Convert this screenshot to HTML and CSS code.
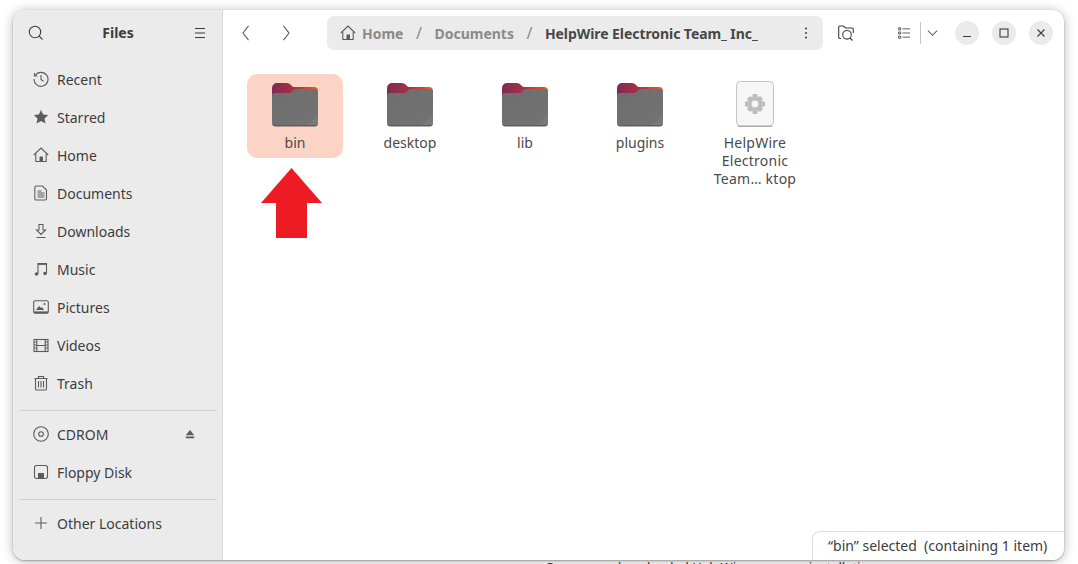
FILE: index.html
```html
<!DOCTYPE html>
<html lang="en">
<head>
<meta charset="utf-8">
<title>Files</title>
<link rel="stylesheet" href="styles.css">
</head>
<body>
<div class="window">
  <aside class="sidebar">
    <header class="side-head">
      <svg class="ic dark" viewBox="0 0 16 16"><circle cx="7" cy="7" r="5.7"/><path d="M11.2 11.2l3.3 3.3"/></svg>
      <span class="side-title">Files</span>
      <svg class="ic dark" viewBox="0 0 16 16"><path d="M3 3.500h10M3 8h10M3 12.500h10"/></svg>
    </header>
    <nav class="places">
      <a class="place"><svg class="ic" viewBox="0 0 16 16"><path d="M2.200 4.400A7 7 0 1 1 1 8"/><path d="M1.400 2v3h3"/><path d="M8 4v4.500l2.600 1.800"/></svg>Recent</a>
      <a class="place"><svg class="ic fill" viewBox="0 0 16 16"><path d="M8 .9l2.200 4.600 5 .6-3.700 3.400 1 5L8 12l-4.500 2.500 1-5L.8 6.100l5-.6z"/></svg>Starred</a>
      <a class="place"><svg class="ic" viewBox="0 0 16 16"><path d="M.8 8L8 1l7.200 7"/><path d="M2.800 7v7.500h10.400V7"/><path class="solid" d="M6.500 9.500h3.500v5H6.500z"/></svg>Home</a>
      <a class="place"><svg class="ic" viewBox="0 0 16 16"><path d="M3.300 1h6.200l4 4v8.500a1.500 1.500 0 0 1-1.500 1.500H3.300a1.500 1.500 0 0 1-1.500-1.500v-11A1.500 1.500 0 0 1 3.300 1z"/><path d="M4.500 6h4M4.500 8h7M4.500 10h7M4.500 12h7"/></svg>Documents</a>
      <a class="place"><svg class="ic" viewBox="0 0 16 16"><path d="M6 1.500h4V7h2.500L8 11.500 3.500 7H6z"/><path d="M3.500 14.500h9"/></svg>Downloads</a>
      <a class="place"><svg class="ic" viewBox="0 0 16 16"><path d="M5 13V2.500h8.500V12"/><path class="thick" d="M5 3h8.500"/><circle class="solid" cx="3.500" cy="13" r="1.800"/><circle class="solid" cx="12" cy="12.500" r="1.800"/></svg>Music</a>
      <a class="place"><svg class="ic" viewBox="0 0 16 16"><rect x=".7" y="1.700" width="14.600" height="12.600" rx="1.500"/><path class="solid" d="M3 11l3-4 2 2 1-1 2 3z"/><circle class="solid" cx="11.500" cy="5" r="1"/><path class="thick" d="M1 13.300h14"/></svg>Pictures</a>
      <a class="place"><svg class="ic" viewBox="0 0 16 16"><rect x="1" y="2.500" width="14" height="12"/><path d="M3.800 2.500v12M12.200 2.500v12M3.800 8.500h8.400M1 5h2.800M1 8h2.800M1 11h2.800M12.200 5H15M12.200 8H15M12.200 11H15"/></svg>Videos</a>
      <a class="place"><svg class="ic" viewBox="0 0 16 16"><path d="M1.500 3.500h13M5.500 3.300V1.500h5v1.800"/><path d="M2.500 3.500v10.300a1.200 1.200 0 0 0 1.200 1.200h8.600a1.200 1.200 0 0 0 1.200-1.200V3.500"/><path d="M5.500 6v6.500M8 6v6.500M10.500 6v6.500"/></svg>Trash</a>
    </nav>
    <hr class="rule">
    <nav class="places">
      <a class="place"><svg class="ic" viewBox="0 0 16 16"><circle cx="8" cy="8" r="7.300"/><circle cx="8" cy="8" r="2.300"/></svg>CDROM<svg class="eject" viewBox="0 0 10 10"><path d="M5 1l4.200 5.300H.8z"/><path d="M.8 7.500h8.400v1.800H.8z"/></svg></a>
      <a class="place"><svg class="ic" viewBox="0 0 16 16"><rect x="1.500" y="1.500" width="13" height="13" rx="2.200"/><path class="solid" d="M5 9h6v5.500H5z"/></svg>Floppy Disk</a>
    </nav>
    <hr class="rule">
    <nav class="places">
      <a class="place"><svg class="ic" viewBox="0 0 16 16"><path d="M8 2v12M2 8h12"/></svg>Other Locations</a>
    </nav>
  </aside>
  <main class="content">
    <div class="toolbar">
      <svg class="ic nav" viewBox="0 0 16 16"><path d="M10.500 .8L5 8l5.500 7.200"/></svg>
      <svg class="ic nav next" viewBox="0 0 16 16"><path d="M5.500 .8L11 8l-5.500 7.200"/></svg>
      <div class="pathbar">
        <svg class="ic" viewBox="0 0 16 16"><path d="M.8 8L8 1l7.200 7"/><path d="M2.800 7v7.500h10.400V7"/><path class="solid" d="M6.500 9.500h3.500v5H6.500z"/></svg>
        <span class="crumb home">Home</span>
        <span class="sep">/</span>
        <span class="crumb">Documents</span>
        <span class="sep">/</span>
        <span class="crumb current">HelpWire Electronic Team_ Inc_</span>
        <svg class="kebab" viewBox="0 0 4 12"><circle cx="2" cy="1.500" r="1.100"/><circle cx="2" cy="6" r="1.100"/><circle cx="2" cy="10.500" r="1.100"/></svg>
      </div>
      <svg class="ic dark find" viewBox="0 0 16 16"><path d="M3 13.500H2A1.300 1.300 0 0 1 .7 12.200V2.300A1.300 1.300 0 0 1 2 1h3.500l2 2H14a1.300 1.300 0 0 1 1.300 1.300V8"/><circle cx="9" cy="9.800" r="4.300"/><path d="M12 13l2.500 2.500"/></svg>
      <svg class="ic dark list" viewBox="0 0 16 16"><path d="M6 2.500h10M6 8h10M6 13.500h10"/><path d="M.8 1h2.800v2.800H.8zM.8 6.600h2.800v2.800H.8zM.8 12.200h2.800V15H.8z"/></svg>
      <span class="tool-div"></span>
      <svg class="ic chev" viewBox="0 0 12 8"><path d="M1 1.500L6 6.500l5-5"/></svg>
      <button class="win-btn first"><svg class="ic" viewBox="0 0 12 12"><path d="M2 9.500h8"/></svg></button>
      <button class="win-btn"><svg class="ic" viewBox="0 0 12 12"><rect x="2" y="2" width="8" height="8"/></svg></button>
      <button class="win-btn"><svg class="ic" viewBox="0 0 12 12"><path d="M2.500 2.500l7 7M9.500 2.500l-7 7"/></svg></button>
    </div>
    <div class="grid">
      <div class="tile selected"><svg class="folder dir" viewBox="0 0 46 44"><use href="#folder"/></svg><span class="name">bin</span></div>
      <div class="tile"><svg class="folder dir" viewBox="0 0 46 44"><use href="#folder"/></svg><span class="name">desktop</span></div>
      <div class="tile"><svg class="folder dir" viewBox="0 0 46 44"><use href="#folder"/></svg><span class="name">lib</span></div>
      <div class="tile"><svg class="folder dir" viewBox="0 0 46 44"><use href="#folder"/></svg><span class="name">plugins</span></div>
      <div class="tile"><svg class="folder" viewBox="0 0 46 46">
        <rect x="4.500" y=".5" width="37" height="44.500" rx="4" fill="#f6f6f6" stroke="#c4c4c4"/>
        <path d="M6 45.300h34" stroke="#9a9a9a" fill="none"/>
        <g fill="#bdbdbd"><circle cx="23" cy="23" r="7"/><path d="M20.800 13h4.400l.7 3.500h-5.800zM20.800 33h4.400l.7-3.500h-5.800zM13 20.800v4.400l3.500.7v-5.800zM33 20.800v4.400l-3.500.7v-5.800zM15 18l3-3 2.800 1.900-3.900 3.900zM31 28l-3 3-2.800-1.900 3.900-3.900zM28 15l3 3-1.900 2.800-3.900-3.900zM18 31l-3-3 1.900-2.800 3.900 3.900z"/></g>
        <circle cx="23" cy="23" r="3.400" fill="#f6f6f6"/>
      </svg><span class="name long">HelpWire Electronic Team… ktop</span></div>
    </div>
    <svg class="arrow" viewBox="0 0 61 70"><path d="M30.500 0L61 35H46v35H15V35H0z"/></svg>
    <div class="status">“bin” selected&nbsp; (containing 1 item)</div>
  </main>
</div>
<p class="behind">Open your downloaded HelpWire, run new installation</p>
<svg class="defs" width="0" height="0">
  <defs>
    <linearGradient id="back" x1="0" x2="1" y1="0" y2="0"><stop offset="0" stop-color="#7f2a55"/><stop offset=".5" stop-color="#a83345"/><stop offset="1" stop-color="#e9621f"/></linearGradient>
    <linearGradient id="front" x1="0" x2="1" y1="0" y2="1"><stop offset="0" stop-color="#6e6e6e"/><stop offset=".86" stop-color="#727272"/><stop offset=".87" stop-color="#7a7a7a"/><stop offset="1" stop-color="#7a7a7a"/></linearGradient>
    <symbol id="folder" viewBox="0 0 46 44">
      <path d="M0 5a5 5 0 0 1 5-5h10q3 0 4.500 2.500q1 1.500 3 1.500H42a4 4 0 0 1 4 4v10H0z" fill="url(#back)"/>
      <path d="M0 13a3 3 0 0 1 3-3h14q2 0 3-1.500t3-2.500h20a3 3 0 0 1 3 3v30a3.500 3.500 0 0 1-3.500 3.500h-39A3.500 3.500 0 0 1 0 39.500z" fill="url(#front)"/>
      <path d="M0 39.500v.5a3.500 3.500 0 0 0 3.500 3.500h39a3.500 3.500 0 0 0 3.500-3.500v-.5a3 3 0 0 1-3 2.500H3a3 3 0 0 1-3-2.500z" fill="#5e5e5e"/>
    </symbol>
  </defs>
</svg>
</body>
</html>
```
FILE: styles.css
```css
* { box-sizing: border-box; }
html, body { margin: 0; height: 564px; overflow: hidden; background: #fff; }
body {
  padding: 10px 14px 0 13px;
  font-family: "Noto Sans", "Open Sans", sans-serif;
  font-size: 14px;
  color: #3d3d3d;
}
.window {
  display: flex;
  width: 1051px;
  height: 550px;
  border-radius: 12px;
  overflow: hidden;
  background: #fff;
  box-shadow: 0 1px 2px rgba(0,0,0,.28), 0 1px 12px rgba(0,0,0,.28);
  position: relative;
  z-index: 1;
}
.ic {
  width: 16px;
  height: 16px;
  flex: none;
  fill: none;
  stroke: #5c5c5c;
  stroke-width: 1.1;
}
.ic.dark { stroke: #3d3d3d; }
.ic.fill { fill: #5c5c5c; stroke: none; }
.solid { fill: #5c5c5c; stroke: none; }
.thick { stroke-width: 1.8; }
.sidebar {
  width: 210px;
  flex: none;
  background: #ebebeb;
  border-right: 1px solid #d8d8d8;
}
.side-head {
  height: 45px;
  display: flex;
  align-items: center;
  justify-content: space-between;
  padding: 0 14px 0 15px;
  margin-bottom: 5px;
}
.side-title { font-weight: 700; font-size: 14px; color: #3d3d3d; }
.places { display: flex; flex-direction: column; }
.place {
  height: 38px;
  display: flex;
  align-items: center;
  gap: 8px;
  padding-left: 20px;
  color: #3d3d3d;
  font-size: 14px;
}
.eject { width: 10px; height: 10px; margin-left: auto; margin-right: 27px; fill: #5c5c5c; }
.rule { border: 0; border-top: 1px solid #d2d2d2; margin: 8px 5px 4px 6px; }
.content { flex: 1; position: relative; min-width: 0; }
.toolbar {
  height: 46px;
  display: flex;
  align-items: center;
  padding-left: 15px;
}
.nav { margin-right: 24px; }
.nav.next { margin-right: 33px; }
.pathbar {
  width: 496px;
  height: 34px;
  border-radius: 7px;
  background: #ebebeb;
  display: flex;
  align-items: center;
  padding: 0 15px 0 13px;
  font-weight: 700;
  font-size: 14px;
}
.crumb { color: #8a8a8a; }
.crumb.home { margin-left: 6px; }
.crumb.current { color: #474747; letter-spacing: -.07px; }
.sep { color: #8a8a8a; font-weight: 400; font-size: 16px; margin: 0 12.5px; }
.kebab { width: 4px; height: 12px; margin-left: auto; fill: #4a4a4a; }
.find { margin-left: 15px; }
.list { width: 12px; height: 12px; margin-left: 44px; }
.tool-div { width: 1px; height: 22px; background: #c4c4c4; margin-left: 10px; }
.chev { width: 11px; height: 8px; margin-left: 6px; }
.win-btn {
  width: 24px;
  height: 24px;
  padding: 0;
  border: 0;
  border-radius: 50%;
  background: #ebebeb;
  margin-left: 13px;
  display: flex;
  align-items: center;
  justify-content: center;
}
.win-btn.first { margin-left: 17px; }
.win-btn .ic { width: 12px; height: 12px; stroke: #3d3d3d; }
.grid {
  display: grid;
  grid-template-columns: repeat(5, 96px);
  column-gap: 19px;
  padding: 18px 0 0 24px;
  align-items: start;
}
.tile {
  display: flex;
  flex-direction: column;
  align-items: center;
  padding: 7px 0 6px;
  border-radius: 10px;
  height: 84px;
}
.tile.selected { background: #fbd4c6; }
.folder { width: 46px; height: 46px; flex: none; }
.folder.dir { height: 44px; margin-top: 2px; }
.name {
  text-align: center;
  line-height: 18px;
  margin-top: 7px;
  font-size: 14px;
  color: #4a4a4a;
  width: 96px;
}
.name.long { letter-spacing: .25px; }
.arrow { position: absolute; left: 38px; top: 158px; width: 61px; height: 70px; fill: #ed1c24; }
.status {
  position: absolute;
  right: 0;
  bottom: 0;
  width: 252px;
  height: 29px;
  background: #fff;
  border: 1px solid #dcdcdc;
  border-width: 1px 0 0 1px;
  border-top-left-radius: 8px;
  padding-left: 15px;
  line-height: 28px;
  color: #3d3d3d;
  font-size: 14px;
}
.behind { margin: 0; padding-left: 532px; line-height: 14px; font-size: 13px; color: #333; white-space: nowrap; }
.defs { position: absolute; }
```
